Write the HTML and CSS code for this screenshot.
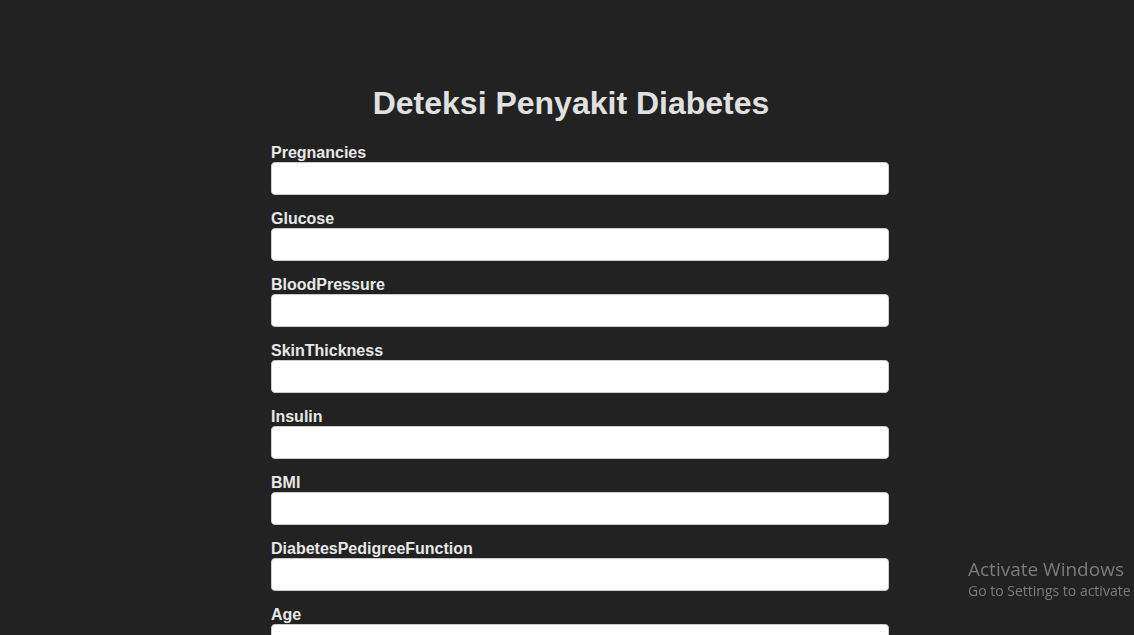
FILE: index.html
```html
<!DOCTYPE html>
<html lang="id">
<head>
<meta charset="utf-8">
<title>Deteksi Penyakit Diabetes</title>
<link rel="stylesheet" href="styles.css">
</head>
<body>
<div class="container">
  <h1 class="title">Deteksi Penyakit Diabetes</h1>
  <form class="form">
    <label class="label" for="f1">Pregnancies</label>
    <input class="field" id="f1" type="text">
    <label class="label" for="f2">Glucose</label>
    <input class="field" id="f2" type="text">
    <label class="label" for="f3">BloodPressure</label>
    <input class="field" id="f3" type="text">
    <label class="label" for="f4">SkinThickness</label>
    <input class="field" id="f4" type="text">
    <label class="label" for="f5">Insulin</label>
    <input class="field" id="f5" type="text">
    <label class="label" for="f6">BMI</label>
    <input class="field" id="f6" type="text">
    <label class="label" for="f7">DiabetesPedigreeFunction</label>
    <input class="field" id="f7" type="text">
    <label class="label" for="f8">Age</label>
    <input class="field" id="f8" type="text">
  </form>
</div>
<div class="activate">
  <div class="activate-title">Activate Windows</div>
  <div class="activate-sub">Go to Settings to activate Windows.</div>
</div>
</body>
</html>
```

FILE: styles.css
```css
html, body {
  margin: 0;
  padding: 0;
  background: #222222;
  overflow: hidden;
}
body {
  font-family: "Liberation Sans", Arial, sans-serif;
  color: #e0e0e0;
}
.container {
  width: 600px;
  margin-left: 271px;
  padding-top: 85px;
}
.title {
  margin: 0 0 22px;
  font-size: 32px;
  font-weight: bold;
  text-align: center;
  color: #e0e0e0;
  line-height: 37px;
}
.form {
  margin: 0;
}
.label {
  display: block;
  font-size: 16px;
  font-weight: bold;
  line-height: 18px;
  color: #e8e8e8;
}
.field {
  display: block;
  width: 100%;
  height: 15px;
  padding: 8px;
  margin: 0 0 15px;
  border: 1px solid #cccccc;
  border-radius: 4px;
  background: #ffffff;
  font-size: 14px;
  box-sizing: content-box;
}
.activate {
  position: fixed;
  left: 968px;
  top: 557px;
  white-space: nowrap;
  font-family: "Open Sans", "Noto Sans", sans-serif;
  color: #7b7b7b;
}
.activate-title {
  font-size: 19px;
  line-height: 24px;
}
.activate-sub {
  font-size: 14px;
  line-height: 20px;
}
```
